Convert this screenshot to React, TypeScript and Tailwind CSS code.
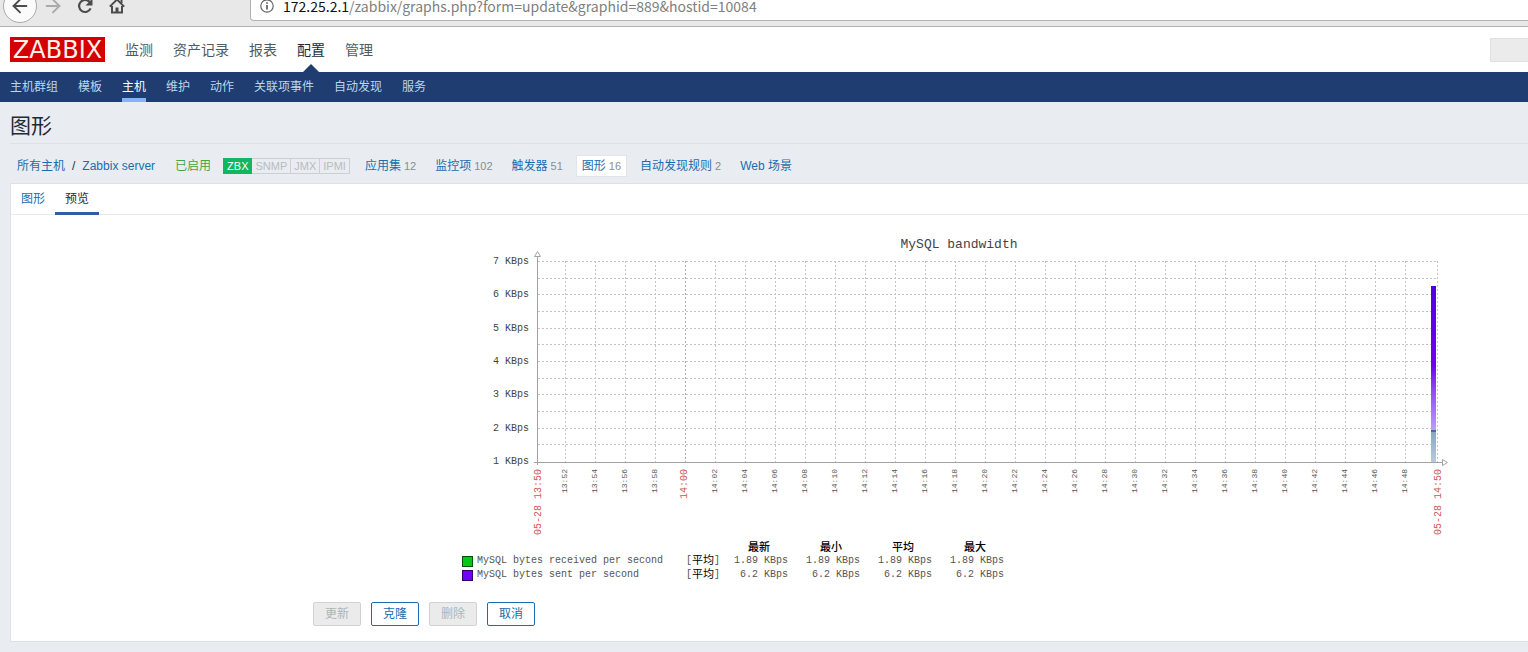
import { ArrowLeft, ArrowRight } from "lucide-react";

const mainMenu = ["监测", "资产记录", "报表", "配置", "管理"];

const subMenu = [
  "主机群组",
  "模板",
  "主机",
  "维护",
  "动作",
  "关联项事件",
  "自动发现",
  "服务",
];

const hostLinks = [
  { label: "应用集", count: "12" },
  { label: "监控项", count: "102" },
  { label: "触发器", count: "51" },
  { label: "图形", count: "16" },
  { label: "自动发现规则", count: "2" },
  { label: "Web 场景", count: "" },
];

const legend = [
  { name: "MySQL bytes received per second", color: "#00c817", value: "1.89 KBps" },
  { name: "MySQL bytes sent per second", color: "#6f00ff", value: "6.2 KBps" },
];

function BrowserBar() {
  return (
    <div className="flex h-[27px] items-start overflow-hidden border-b border-[#b1b1b1] bg-[#e8e8e8] text-[#4c4c4c]">
      <button
        aria-label="Back"
        className="-mt-[11px] ml-[3px] flex size-[34px] shrink-0 items-center justify-center rounded-full border border-[#aaaaaa] bg-[#fbfbfb]"
      >
        <ArrowLeft className="size-[22px]" />
      </button>
      <button aria-label="Forward" className="-mt-[5px] ml-[5px] shrink-0 text-[#aaaaaa]">
        <ArrowRight className="size-[22px]" />
      </button>
      <button aria-label="Reload" className="-mt-0.5 ml-[13px] shrink-0">
        <svg width="16" height="16" viewBox="0 0 16 16" fill="none">
          <path d="M13.6 10.4A6 6 0 1 1 12.6 4" stroke="currentColor" strokeWidth="2.2" />
          <path d="M15.5 0.5V7.5H8.5Z" fill="currentColor" />
        </svg>
      </button>
      <button aria-label="Home" className="-mt-0.5 ml-4 shrink-0">
        <svg width="16" height="16" viewBox="0 0 16 16" fill="none" stroke="currentColor">
          <path d="M0.8 8.6L8 1.6L15.2 8.6" strokeWidth="2" />
          <path d="M3 8V14.6H13V8" strokeWidth="2" />
          <path d="M8 9.5V15" strokeWidth="3" />
          <path d="M12.5 1.5V5" strokeWidth="2" />
        </svg>
      </button>
      <div className="ml-[125px] flex h-[21px] grow items-start rounded-bl-sm border-b border-l border-[#b1b1b1] bg-white">
        <svg className="-mt-px ml-[9px] shrink-0" width="14" height="14" viewBox="0 0 14 14" fill="none">
          <circle cx="7" cy="7" r="6.2" stroke="#666" strokeWidth="1.2" />
          <path d="M7 6V10.5M7 3.2V4.8" stroke="#555" strokeWidth="1.6" />
        </svg>
        <p className="ml-[9px] font-['Noto_Sans_CJK_SC',sans-serif] text-[14px] leading-3 whitespace-nowrap text-[#808080]">
          <span className="text-[#111111]">172.25.2.1</span>
          /zabbix/graphs.php?form=update&amp;graphid=889&amp;hostid=10084
        </p>
      </div>
    </div>
  );
}

function Header() {
  return (
    <header>
      <div className="flex h-[45px] items-center bg-white pl-2.5">
        <a
          href="#"
          className="flex h-[25px] w-[95px] items-center justify-center bg-[#d40000] font-['DejaVu_Sans',sans-serif] text-[24px] leading-6 text-[#fff0ea]"
        >
          ZABBIX
        </a>
        <nav className="ml-5 flex h-full gap-5 text-[14px]">
          {mainMenu.map((item) => (
            <a
              key={item}
              href="#"
              className={
                item === "配置"
                  ? "relative flex items-center pt-0.5 text-[#1f2c33]"
                  : "flex items-center pt-0.5 text-[#4f5b63]"
              }
            >
              {item}
              {item === "配置" && (
                <svg
                  className="absolute bottom-0 left-1/2 -translate-x-1/2"
                  width="16"
                  height="8"
                  viewBox="0 0 16 8"
                >
                  <path d="M0 8L8 0L16 8Z" fill="#1f3d70" />
                </svg>
              )}
            </a>
          ))}
        </nav>
        <div className="ml-auto h-6 w-[38px] border border-r-0 border-[#e0e0e0] bg-[#ebebeb]" />
      </div>
      <nav className="flex h-[30px] gap-5 bg-[#1f3d70] pl-2.5 text-[12px]">
        {subMenu.map((item) => (
          <a
            key={item}
            href="#"
            className={
              item === "主机"
                ? "flex items-center border-b-4 border-[#86b3f6] pt-1 text-white"
                : "flex items-center text-[#b9d7ee]"
            }
          >
            {item}
          </a>
        ))}
      </nav>
    </header>
  );
}

function HostBar() {
  return (
    <div className="flex h-10 items-center pt-1 pl-[7px] text-[12px] leading-5 whitespace-nowrap text-[#1a6cb0]">
      <a href="#">所有主机</a>
      <span className="px-[7px] text-[#1f2c33]">/</span>
      <a href="#">Zabbix server</a>
      <span className="ml-5 text-[#3fa845]">已启用</span>
      <span className="ml-3 flex text-[11px] leading-[14px] text-[#b8bcbf]">
        <span className="border border-[#12b562] bg-[#12b562] px-[3px] text-white">ZBX</span>
        <span className="border border-l-0 border-[#cdd0d2] px-[3px]">SNMP</span>
        <span className="border border-l-0 border-[#cdd0d2] px-[3px]">JMX</span>
        <span className="border border-l-0 border-[#cdd0d2] px-[3px]">IPMI</span>
      </span>
      <nav className="ml-[9px] flex gap-[7px]">
        {hostLinks.map((link) => (
          <a
            key={link.label}
            href="#"
            className={
              link.label === "图形"
                ? "flex h-[22px] items-center gap-[3px] bg-white px-1.5 shadow-[0_0_0_1px_#e1e5e8_inset]"
                : "flex h-[22px] items-center gap-[3px] px-1.5"
            }
          >
            {link.label}
            {link.count && <span className="text-[11px] text-[#868d92]">{link.count}</span>}
          </a>
        ))}
      </nav>
    </div>
  );
}

const pad = (n: number) => String(n).padStart(2, "0");

// one vertical line every two minutes, 13:52 - 14:48
const ticks = Array.from({ length: 29 }, (_, i) => {
  const minutes = 13 * 60 + 52 + i * 2;
  return {
    x: 113 + i * 30,
    label: `${pad(Math.floor(minutes / 60))}:${pad(minutes % 60)}`,
  };
});

const rows = [31, 48, 64, 81, 98, 114, 131, 148, 164, 181, 198, 214];
const kbps = [7, 6, 5, 4, 3, 2, 1];

function TimeLabel({ x, label, major }: { x: number; label: string; major?: boolean }) {
  return (
    <text
      transform={`translate(${x} 239) rotate(-90)`}
      textAnchor="end"
      className={major ? "fill-[#d05555] text-[10px]" : "fill-[#555555] text-[8px]"}
    >
      {label}
    </text>
  );
}

function Chart() {
  return (
    <svg
      width="1010"
      height="310"
      viewBox="0 0 1010 310"
      className="block font-['Liberation_Mono',monospace]"
      role="img"
      aria-label="MySQL bandwidth"
    >
      <defs>
        <linearGradient id="sent" x1="0" y1="0" x2="0" y2="1">
          <stop offset="0" stopColor="#5200e0" />
          <stop offset="0.55" stopColor="#7200f0" />
          <stop offset="0.72" stopColor="#8a4cf5" />
          <stop offset="1" stopColor="#bd9cff" />
        </linearGradient>
        <linearGradient id="received" x1="0" y1="0" x2="0" y2="1">
          <stop offset="0" stopColor="#86a9c2" />
          <stop offset="1" stopColor="#b9cbe0" />
        </linearGradient>
      </defs>

      <text x="507" y="18" textAnchor="middle" className="fill-[#444444] text-[13px]">
        MySQL bandwidth
      </text>

      <g stroke="#c4c4c4" strokeDasharray="2 2" shapeRendering="crispEdges">
        {rows.map((y) => (
          <path key={y} d={`M86 ${y}.5H986`} />
        ))}
        {ticks.map((t) => (
          <path
            key={t.x}
            d={`M${t.x}.5 31V232`}
            stroke={t.label === "14:00" ? "#acacac" : undefined}
          />
        ))}
        <path d="M985.5 31V232" />
      </g>

      {kbps.map((n, i) => (
        <text
          key={n}
          x="77"
          y={Math.floor(34.5 + i * 33.3)}
          textAnchor="end"
          className="fill-[#444444] text-[10px]"
        >
          {n} KBps
        </text>
      ))}

      <rect x="979" y="56" width="5" height="144" fill="url(#sent)" />
      <rect x="979" y="200" width="5" height="2" fill="#3f7787" />
      <rect x="979" y="202" width="5" height="30" fill="url(#received)" />

      <g stroke="#a3a3a3" fill="white">
        <path d="M85.5 27V235" />
        <path d="M82 232.5H990" />
        <path d="M82.5 26.5H88.5L85.5 21.5Z" />
        <path d="M990.5 229.5V235.5L995.5 232.5Z" />
      </g>

      <TimeLabel x={89} label="05-28 13:50" major />
      {ticks.map((t) => (
        <TimeLabel key={t.x} x={t.x + 2} label={t.label} major={t.label === "14:00"} />
      ))}
      <TimeLabel x={989} label="05-28 14:50" major />
    </svg>
  );
}

function Legend() {
  return (
    <table className="ml-2.5 border-collapse font-['Liberation_Mono','Noto_Sans_CJK_SC',monospace] text-[10px] leading-[14px] whitespace-pre text-[#555555]">
      <thead>
        <tr className="text-[11px] text-black">
          <td className="w-56 p-0" />
          <td className="w-9 p-0" />
          {["最新", "最小", "平均", "最大"].map((h) => (
            <th key={h} scope="col" className="w-[72px] p-0 font-medium">
              <span className="flex h-3.5 items-center justify-center pt-0.5 pl-0.5">{h}</span>
            </th>
          ))}
        </tr>
      </thead>
      <tbody>
        {legend.map((row) => (
          <tr key={row.name}>
            <td className="p-0">
              <span className="flex h-3.5 items-center gap-1">
                <span
                  className="size-[11px] border border-black/60"
                  style={{ backgroundColor: row.color }}
                />
                {row.name}
              </span>
            </td>
            <td className="p-0">
              <span className="flex h-3.5 items-center">
                [<span className="text-[11px] text-black">平均</span>]
              </span>
            </td>
            {[0, 1, 2, 3].map((c) => (
              <td key={c} className="p-0 pr-1.5 text-right">
                {row.value}
              </td>
            ))}
          </tr>
        ))}
      </tbody>
    </table>
  );
}

function FormButton({ label, disabled }: { label: string; disabled?: boolean }) {
  return (
    <button
      disabled={disabled}
      className={
        disabled
          ? "h-6 w-12 rounded-xs border border-[#cfd3d6] bg-[#ebebeb] text-[12px] text-[#adb5ba]"
          : "h-6 w-12 rounded-xs border border-[#1a6cb0] bg-white text-[12px] text-[#1a6cb0]"
      }
    >
      {label}
    </button>
  );
}

export default function App() {
  return (
    <div className="min-h-screen overflow-hidden bg-[#e9edf1] font-['Liberation_Sans','Noto_Sans_CJK_SC',sans-serif]">
      <BrowserBar />
      <Header />
      <main className="pb-2.5 pl-2.5">
        <h1 className="flex h-[42px] items-center border-b border-[#dde1e5] pt-1.5 text-[21px] text-[#1f2c33]">
          图形
        </h1>
        <HostBar />
        <section className="-mt-px border-y border-l border-[#dde1e5] bg-white pb-[15px]">
          <div role="tablist" className="flex h-[31px] border-b border-[#e8ebee] text-[12px]">
            <button role="tab" aria-selected="false" className="px-2.5 text-[#1a6cb0]">
              图形
            </button>
            <button
              role="tab"
              aria-selected="true"
              className="-mb-px border-b-3 border-[#2f5da8] px-2.5 pt-0.5 text-[#1f2c33]"
            >
              预览
            </button>
          </div>
          <div className="pt-[15px] pl-[441px]">
            <Chart />
            <Legend />
          </div>
          <div className="mt-5 ml-[302px] flex gap-2.5">
            <FormButton label="更新" disabled />
            <FormButton label="克隆" />
            <FormButton label="删除" disabled />
            <FormButton label="取消" />
          </div>
        </section>
      </main>
    </div>
  );
}
